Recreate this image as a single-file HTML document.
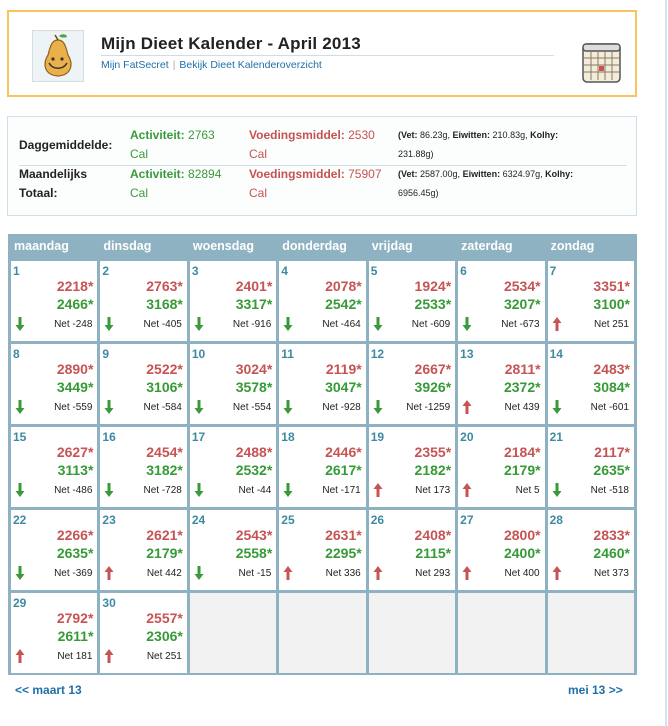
<!DOCTYPE html>
<html><head><meta charset="utf-8">
<style>
*{margin:0;padding:0;box-sizing:border-box}
body{width:668px;height:726px;background:#fff;font-family:"Liberation Sans",Arial,sans-serif;position:relative;overflow:hidden}
.vline{position:absolute;left:665px;top:0;width:2px;height:726px;background:#cfe6f2}
.hdr{position:absolute;left:7px;top:10px;width:630px;height:87px;border:2px solid #f8c45c;background:#fff}
.pear{position:absolute;left:23px;top:18px;width:52px;height:52px;border:1px solid #d5dde2;background:#eef3f6}
.title{position:absolute;left:92px;top:22px;font-size:17px;font-weight:bold;color:#222;letter-spacing:0.2px}
.tline{position:absolute;left:92px;top:43px;width:453px;height:1px;background:#cfdde8}
.links{position:absolute;left:92px;top:47px;font-size:10.5px;color:#1f6fa8}
.links .sep{color:#aaa;margin:0 4px}
.calico{position:absolute;left:573px;top:30px}
.sum{position:absolute;left:7px;top:116px;width:630px;height:100px;border:1px solid #cfe0ea;background:#fcfdfd}
.sum .l{position:absolute;font-size:12px;font-weight:bold;color:#222;line-height:19px}
.sum .a{position:absolute;font-size:12px;color:#3a9a3a;line-height:19px}
.sum .v{position:absolute;font-size:12px;color:#c65252;line-height:19px}
.sum .d{position:absolute;font-size:9px;color:#222;line-height:19px}
.sum .sep{position:absolute;left:11px;top:48px;width:608px;height:1px;background:#cfe0ea}
.grid{position:absolute;left:8px;top:234px;width:629px;height:441px;background:#8eb2c1;display:grid;grid-template-columns:repeat(7,1fr);grid-template-rows:21px repeat(5,80px);gap:3px;padding:3px}
.h{color:#fff;font-weight:bold;font-size:12.5px;padding-left:3px;line-height:19px;background:#8eb2c1}
.c{background:#fff;position:relative}
.e{background:#f2f2f2}
.n{position:absolute;left:2px;top:3px;font-size:12px;font-weight:bold;color:#3e8aa3}
.r{position:absolute;right:4px;top:17px;font-size:14px;font-weight:bold;color:#c65454}
.g{position:absolute;right:4px;top:35px;font-size:14px;font-weight:bold;color:#369a36}
.net{position:absolute;right:5px;top:58px;font-size:10px;color:#222}
.ar{position:absolute;left:4px;top:56px}
.nav{position:absolute;top:683px;font-size:12px;font-weight:bold;color:#1f6fa8}
</style></head><body>
<div class="vline"></div>
<div class="hdr">
 <div class="pear"><svg width="50" height="50" viewBox="0 0 50 50"><path d="M25 9c-7 0-8 8-10 15-5 7-5 20 10 21 15-1 15-14 10-21-2-7-3-15-10-15z" fill="#eab04a" stroke="#8a6420" stroke-width="1.2"/><path d="M25 9l-3-5" stroke="#6b4a1a" stroke-width="1.5"/><path d="M26 5c3-3 8-2 8 1-3 1-6 1-8-1z" fill="#4aa64a"/><circle cx="20" cy="28" r="1.6" fill="#333"/><circle cx="29" cy="28" r="1.6" fill="#333"/><path d="M16 32c4 7 14 7 18 0" stroke="#333" stroke-width="1.5" fill="none"/></svg></div>
 <div class="title">Mijn Dieet Kalender - April 2013</div>
 <div class="tline"></div>
 <div class="links">Mijn FatSecret<span class="sep">|</span>Bekijk Dieet Kalenderoverzicht</div>
 <svg class="calico" width="40" height="42" viewBox="0 0 40 42"><rect x="1" y="2" width="37" height="38" rx="4" fill="#f3ecd8" stroke="#555" stroke-width="1.5"/><rect x="1" y="2" width="37" height="7" rx="3" fill="#ddd" stroke="#555" stroke-width="1.5"/><g stroke="#8a7a6a" stroke-width="1"><line x1="9" y1="9" x2="9" y2="38"/><line x1="16" y1="9" x2="16" y2="38"/><line x1="23" y1="9" x2="23" y2="38"/><line x1="30" y1="9" x2="30" y2="38"/><line x1="2" y1="16" x2="37" y2="16"/><line x1="2" y1="23" x2="37" y2="23"/><line x1="2" y1="30" x2="37" y2="30"/></g><rect x="17" y="24" width="5" height="5" fill="#d05050"/></svg>
</div>
<div class="sum">
 <div class="l" style="left:11px;top:19px">Daggemiddelde:</div>
 <div class="a" style="left:122px;top:9px"><b>Activiteit:</b> 2763<br>Cal</div>
 <div class="v" style="left:241px;top:9px"><b>Voedingsmiddel:</b> 2530<br>Cal</div>
 <div class="d" style="left:390px;top:9px"><b>(Vet:</b> 86.23g, <b>Eiwitten:</b> 210.83g, <b>Kolhy:</b><br>231.88g)</div>
 <div class="sep"></div>
 <div class="l" style="left:11px;top:48px">Maandelijks<br>Totaal:</div>
 <div class="a" style="left:122px;top:48px"><b>Activiteit:</b> 82894<br>Cal</div>
 <div class="v" style="left:241px;top:48px"><b>Voedingsmiddel:</b> 75907<br>Cal</div>
 <div class="d" style="left:390px;top:48px"><b>(Vet:</b> 2587.00g, <b>Eiwitten:</b> 6324.97g, <b>Kolhy:</b><br>6956.45g)</div>
</div>
<svg width="0" height="0" style="position:absolute"><defs>
<symbol id="dn" viewBox="0 0 10 14"><path d="M3.5 0h3v8h3L5 14 0.5 8h3z" fill="#3a9a3a"/></symbol>
<symbol id="up" viewBox="0 0 10 14"><path d="M3.5 14h3V6h3L5 0 0.5 6h3z" fill="#c65454"/></symbol>
</defs></svg>
<div class="grid">
<div class="h">maandag</div><div class="h">dinsdag</div><div class="h">woensdag</div><div class="h">donderdag</div><div class="h">vrijdag</div><div class="h">zaterdag</div><div class="h">zondag</div>
<div class="c"><div class="n">1</div><div class="r">2218*</div><div class="g">2466*</div><svg class="ar" width="10" height="14"><use href="#dn"/></svg><div class="net">Net -248</div></div>
<div class="c"><div class="n">2</div><div class="r">2763*</div><div class="g">3168*</div><svg class="ar" width="10" height="14"><use href="#dn"/></svg><div class="net">Net -405</div></div>
<div class="c"><div class="n">3</div><div class="r">2401*</div><div class="g">3317*</div><svg class="ar" width="10" height="14"><use href="#dn"/></svg><div class="net">Net -916</div></div>
<div class="c"><div class="n">4</div><div class="r">2078*</div><div class="g">2542*</div><svg class="ar" width="10" height="14"><use href="#dn"/></svg><div class="net">Net -464</div></div>
<div class="c"><div class="n">5</div><div class="r">1924*</div><div class="g">2533*</div><svg class="ar" width="10" height="14"><use href="#dn"/></svg><div class="net">Net -609</div></div>
<div class="c"><div class="n">6</div><div class="r">2534*</div><div class="g">3207*</div><svg class="ar" width="10" height="14"><use href="#dn"/></svg><div class="net">Net -673</div></div>
<div class="c"><div class="n">7</div><div class="r">3351*</div><div class="g">3100*</div><svg class="ar" width="10" height="14"><use href="#up"/></svg><div class="net">Net 251</div></div>
<div class="c"><div class="n">8</div><div class="r">2890*</div><div class="g">3449*</div><svg class="ar" width="10" height="14"><use href="#dn"/></svg><div class="net">Net -559</div></div>
<div class="c"><div class="n">9</div><div class="r">2522*</div><div class="g">3106*</div><svg class="ar" width="10" height="14"><use href="#dn"/></svg><div class="net">Net -584</div></div>
<div class="c"><div class="n">10</div><div class="r">3024*</div><div class="g">3578*</div><svg class="ar" width="10" height="14"><use href="#dn"/></svg><div class="net">Net -554</div></div>
<div class="c"><div class="n">11</div><div class="r">2119*</div><div class="g">3047*</div><svg class="ar" width="10" height="14"><use href="#dn"/></svg><div class="net">Net -928</div></div>
<div class="c"><div class="n">12</div><div class="r">2667*</div><div class="g">3926*</div><svg class="ar" width="10" height="14"><use href="#dn"/></svg><div class="net">Net -1259</div></div>
<div class="c"><div class="n">13</div><div class="r">2811*</div><div class="g">2372*</div><svg class="ar" width="10" height="14"><use href="#up"/></svg><div class="net">Net 439</div></div>
<div class="c"><div class="n">14</div><div class="r">2483*</div><div class="g">3084*</div><svg class="ar" width="10" height="14"><use href="#dn"/></svg><div class="net">Net -601</div></div>
<div class="c"><div class="n">15</div><div class="r">2627*</div><div class="g">3113*</div><svg class="ar" width="10" height="14"><use href="#dn"/></svg><div class="net">Net -486</div></div>
<div class="c"><div class="n">16</div><div class="r">2454*</div><div class="g">3182*</div><svg class="ar" width="10" height="14"><use href="#dn"/></svg><div class="net">Net -728</div></div>
<div class="c"><div class="n">17</div><div class="r">2488*</div><div class="g">2532*</div><svg class="ar" width="10" height="14"><use href="#dn"/></svg><div class="net">Net -44</div></div>
<div class="c"><div class="n">18</div><div class="r">2446*</div><div class="g">2617*</div><svg class="ar" width="10" height="14"><use href="#dn"/></svg><div class="net">Net -171</div></div>
<div class="c"><div class="n">19</div><div class="r">2355*</div><div class="g">2182*</div><svg class="ar" width="10" height="14"><use href="#up"/></svg><div class="net">Net 173</div></div>
<div class="c"><div class="n">20</div><div class="r">2184*</div><div class="g">2179*</div><svg class="ar" width="10" height="14"><use href="#up"/></svg><div class="net">Net 5</div></div>
<div class="c"><div class="n">21</div><div class="r">2117*</div><div class="g">2635*</div><svg class="ar" width="10" height="14"><use href="#dn"/></svg><div class="net">Net -518</div></div>
<div class="c"><div class="n">22</div><div class="r">2266*</div><div class="g">2635*</div><svg class="ar" width="10" height="14"><use href="#dn"/></svg><div class="net">Net -369</div></div>
<div class="c"><div class="n">23</div><div class="r">2621*</div><div class="g">2179*</div><svg class="ar" width="10" height="14"><use href="#up"/></svg><div class="net">Net 442</div></div>
<div class="c"><div class="n">24</div><div class="r">2543*</div><div class="g">2558*</div><svg class="ar" width="10" height="14"><use href="#dn"/></svg><div class="net">Net -15</div></div>
<div class="c"><div class="n">25</div><div class="r">2631*</div><div class="g">2295*</div><svg class="ar" width="10" height="14"><use href="#up"/></svg><div class="net">Net 336</div></div>
<div class="c"><div class="n">26</div><div class="r">2408*</div><div class="g">2115*</div><svg class="ar" width="10" height="14"><use href="#up"/></svg><div class="net">Net 293</div></div>
<div class="c"><div class="n">27</div><div class="r">2800*</div><div class="g">2400*</div><svg class="ar" width="10" height="14"><use href="#up"/></svg><div class="net">Net 400</div></div>
<div class="c"><div class="n">28</div><div class="r">2833*</div><div class="g">2460*</div><svg class="ar" width="10" height="14"><use href="#up"/></svg><div class="net">Net 373</div></div>
<div class="c"><div class="n">29</div><div class="r">2792*</div><div class="g">2611*</div><svg class="ar" width="10" height="14"><use href="#up"/></svg><div class="net">Net 181</div></div>
<div class="c"><div class="n">30</div><div class="r">2557*</div><div class="g">2306*</div><svg class="ar" width="10" height="14"><use href="#up"/></svg><div class="net">Net 251</div></div>
<div class="c e"></div><div class="c e"></div><div class="c e"></div><div class="c e"></div><div class="c e"></div>
</div>
<div class="nav" style="left:15px">&lt;&lt; maart 13</div>
<div class="nav" style="left:568px">mei 13 &gt;&gt;</div>
</body></html>
